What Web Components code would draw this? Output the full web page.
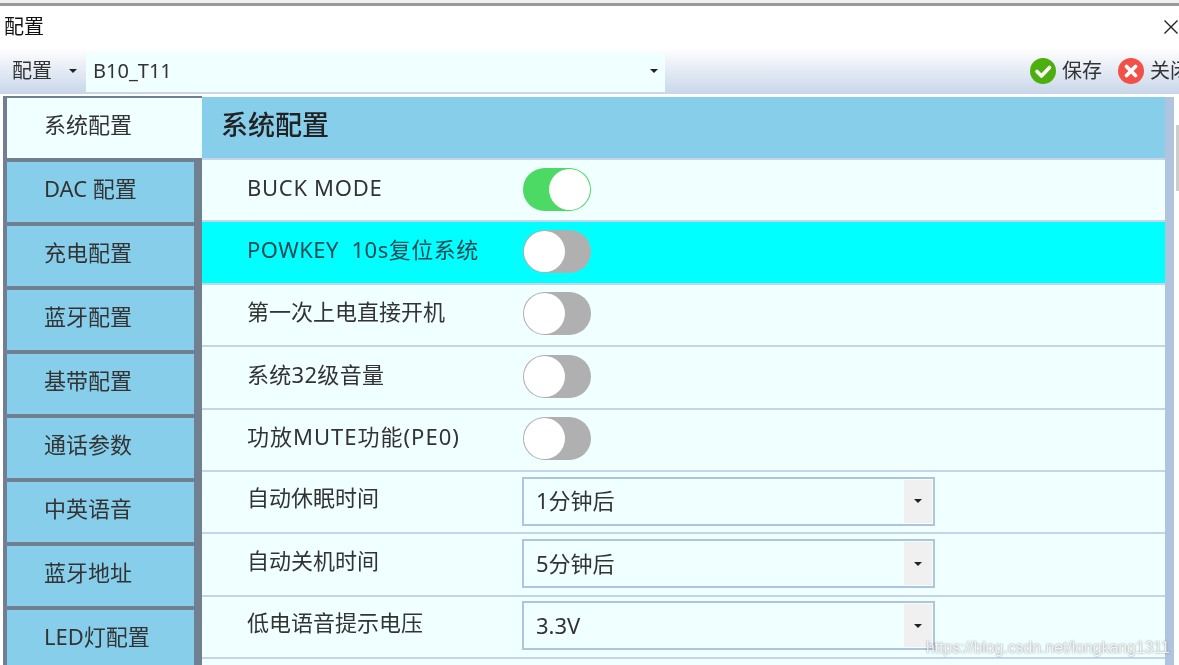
<!DOCTYPE html>
<html lang="zh">
<head>
<meta charset="utf-8">
<title>配置</title>
<style>
    html, body {
        margin: 0;
        height: 100%;
        overflow: hidden;
        background-color: white;
        font-family: "Noto Sans", "Noto Sans CJK SC", sans-serif;
    }
</style>
</head>
<body>
<config-window>
    <span slot="title">配置</span>
    <tool-bar slot="toolbar" profile="B10_T11"></tool-bar>
    <tab-item slot="tabs" active>系统配置</tab-item>
    <tab-item slot="tabs">DAC 配置</tab-item>
    <tab-item slot="tabs">充电配置</tab-item>
    <tab-item slot="tabs">蓝牙配置</tab-item>
    <tab-item slot="tabs">基带配置</tab-item>
    <tab-item slot="tabs">通话参数</tab-item>
    <tab-item slot="tabs">中英语音</tab-item>
    <tab-item slot="tabs">蓝牙地址</tab-item>
    <tab-item slot="tabs">LED灯配置</tab-item>
    <span slot="heading">系统配置</span>
    <setting-row label="BUCK MODE" style="--label-spacing: 0.7px"><toggle-switch on></toggle-switch></setting-row>
    <setting-row label="POWKEY&nbsp;&nbsp;10s复位系统" style="--label-spacing: 0.5px" hot><toggle-switch></toggle-switch></setting-row>
    <setting-row label="第一次上电直接开机"><toggle-switch></toggle-switch></setting-row>
    <setting-row label="系统32级音量" style="--label-spacing: 0.3px"><toggle-switch></toggle-switch></setting-row>
    <setting-row label="功放MUTE功能(PE0)" style="--label-spacing: 1px"><toggle-switch></toggle-switch></setting-row>
    <setting-row label="自动休眠时间" raised><select-box value="1分钟后"></select-box></setting-row>
    <setting-row label="自动关机时间" raised><select-box value="5分钟后"></select-box></setting-row>
    <setting-row label="低电语音提示电压" raised><select-box value="3.3V"></select-box></setting-row>
    <setting-row label=""></setting-row>
</config-window>

<script>
const FONT = `"Noto Sans", "Noto Sans CJK SC", sans-serif`;

const windowTemplate = document.createElement("template");
windowTemplate.innerHTML = `
<style>
    :host {
        display: flex;
        flex-direction: column;
        height: 665px;
        overflow: hidden;
        position: relative;
        font-family: ${FONT};
        color: #333;
        filter: blur(0.45px);
    }

    .topEdge {
        flex: none;
        height: 3px;
        background-color: #f0f0f0;
        border-bottom: 3px solid #999;
    }

    .titleBar {
        flex: none;
        height: 44px;
        box-sizing: border-box;
        display: flex;
        align-items: center;
        justify-content: space-between;
        padding: 0 0 3px 4px;
        font-size: 20px;
        line-height: 28px;
        color: #111;
    }

    .body {
        flex: 1;
        min-height: 0;
        display: flex;
        margin-top: 1px;
        padding-left: 3px;
    }

    .tabs {
        flex: none;
        width: 199px;
        display: flex;
        flex-direction: column;
        gap: 3.6px;
        margin-top: 1px;
        padding-top: 2px;
        background-color: #708090;
        box-sizing: border-box;
    }

    .main {
        flex: none;
        width: 963px;
        display: flex;
        flex-direction: column;
    }

    .heading {
        flex: none;
        height: 63px;
        box-sizing: border-box;
        margin-top: 2px;
        display: flex;
        align-items: center;
        padding: 0 0 5px 19px;
        background-color: #87ceeb;
        font-size: 27px;
        line-height: 36px;
        font-weight: 500;
        color: #222;
        border-bottom: 2px solid #c6d4e8;
    }

    .strip {
        flex: none;
        width: 9px;
        margin-top: 2px;
        background-color: #b0c4de;
    }

    .scroll {
        flex: 1;
        background-color: white;
        position: relative;
    }

    .thumb {
        position: absolute;
        top: 30px;
        left: 2px;
        right: 0;
        height: 66px;
        background-color: #cdcdcd;
    }

    .watermark {
        position: absolute;
        left: 926px;
        top: 639px;
        font-family: "Liberation Sans", sans-serif;
        font-size: 15.8px;
        white-space: nowrap;
        color: rgba(255, 255, 255, 0.85);
        text-shadow: 0 0 2px rgba(60, 60, 60, 0.65);
    }
</style>
<div class="topEdge"></div>
<div class="titleBar">
    <slot name="title"></slot>
    <svg width="16" height="16" viewBox="0 0 16 16"><path d="M1.5 1.5 L14.5 14.5 M14.5 1.5 L1.5 14.5" stroke="#222" stroke-width="1.4" fill="none"/></svg>
</div>
<slot name="toolbar"></slot>
<div class="body">
    <div class="tabs"><slot name="tabs"></slot></div>
    <div class="main">
        <div class="heading"><slot name="heading"></slot></div>
        <slot></slot>
    </div>
    <div class="strip"></div>
    <div class="scroll"><div class="thumb"></div></div>
</div>
<div class="watermark">https://blog.csdn.net/longkang1311</div>`;

class ConfigWindow extends HTMLElement {
    connectedCallback () {
        const shadowRoot = this.attachShadow({mode: "open"});
        shadowRoot.appendChild(windowTemplate.content.cloneNode(true));
    }
}

const toolbarTemplate = document.createElement("template");
toolbarTemplate.innerHTML = `
<style>
    :host {
        display: flex;
        align-items: stretch;
        flex: none;
        height: 44px;
        overflow: hidden;
        background: linear-gradient(#fdfdfe, #c8d6e9);
        font-size: 20px;
        line-height: 28px;
        color: #333;
    }

    .menu {
        flex: none;
        width: 83px;
        margin-left: 3px;
        box-sizing: border-box;
        display: flex;
        align-items: center;
        padding: 0 0 2px 9px;
        gap: 17px;
    }

    .caret {
        width: 0;
        height: 0;
        border: 4px solid transparent;
        border-top: 4px solid #222;
        border-bottom: 0;
    }

    .profile {
        flex: none;
        width: 579px;
        box-sizing: border-box;
        margin: 2px 0;
        display: flex;
        align-items: center;
        justify-content: space-between;
        padding: 0 7px 2px 7px;
        background-color: #f0ffff;
    }

    .actions {
        flex: none;
        margin-left: 365px;
        display: flex;
        align-items: center;
        white-space: nowrap;
        padding-bottom: 2px;
    }

    .action {
        display: flex;
        align-items: center;
        gap: 6px;
        margin-right: 16px;
    }
</style>
<div class="menu"><span>配置</span><span class="caret"></span></div>
<div class="profile"><span class="name"></span><span class="caret"></span></div>
<div class="actions">
    <div class="action">
        <svg width="26" height="26" viewBox="0 0 26 26"><circle cx="13" cy="13" r="13" fill="#4caf0e"/><path d="M7 13.5 L11.5 18 L19.5 9.5" stroke="white" stroke-width="3.6" fill="none" stroke-linecap="round" stroke-linejoin="round"/></svg>
        <span>保存</span>
    </div>
    <div class="action">
        <svg width="26" height="26" viewBox="0 0 26 26"><circle cx="13" cy="13" r="13" fill="#f4504a"/><path d="M8.5 8.5 L17.5 17.5 M17.5 8.5 L8.5 17.5" stroke="white" stroke-width="3.8" fill="none" stroke-linecap="round"/></svg>
        <span>关闭</span>
    </div>
</div>`;

class ToolBar extends HTMLElement {
    connectedCallback () {
        const shadowRoot = this.attachShadow({mode: "open"});
        shadowRoot.appendChild(toolbarTemplate.content.cloneNode(true));
        shadowRoot.querySelector(".name").textContent = this.getAttribute("profile");
    }
}

const tabTemplate = document.createElement("template");
tabTemplate.innerHTML = `
<style>
    :host {
        display: flex;
        align-items: center;
        flex: none;
        height: 60.4px;
        box-sizing: border-box;
        margin: 0 8px 0 4px;
        padding: 0 0 8px 37px;
        background-color: #87ceeb;
        font-size: 22px;
        line-height: 30px;
        color: #333;
        white-space: nowrap;
    }

    :host([active]) {
        margin-right: 0;
        background-color: #f0ffff;
    }
</style>
<slot></slot>`;

class TabItem extends HTMLElement {
    connectedCallback () {
        const shadowRoot = this.attachShadow({mode: "open"});
        shadowRoot.appendChild(tabTemplate.content.cloneNode(true));
    }
}

const rowTemplate = document.createElement("template");
rowTemplate.innerHTML = `
<style>
    :host {
        display: flex;
        align-items: center;
        flex: none;
        box-sizing: border-box;
        height: 62.4px;
        padding: 0 0 2px 45px;
        background-color: #f0ffff;
        border-bottom: 2px solid #c6d4e8;
        font-size: 22px;
        line-height: 30px;
        color: #333;
    }

    :host([hot]) {
        background-color: #00ffff;
        color: #174a55;
    }

    .label {
        flex: none;
        width: 276px;
        white-space: nowrap;
        letter-spacing: var(--label-spacing, 0);
        position: relative;
        top: -2.5px;
    }

    :host([raised]) .label {
        top: -4px;
    }
</style>
<div class="label"></div>
<slot></slot>`;

class SettingRow extends HTMLElement {
    connectedCallback () {
        const shadowRoot = this.attachShadow({mode: "open"});
        shadowRoot.appendChild(rowTemplate.content.cloneNode(true));
        shadowRoot.querySelector(".label").textContent = this.getAttribute("label");
    }
}

const toggleTemplate = document.createElement("template");
toggleTemplate.innerHTML = `
<style>
    :host {
        display: flex;
        align-items: center;
        justify-content: flex-start;
        box-sizing: border-box;
        width: 68px;
        height: 43px;
        padding: 1px;
        border-radius: 22px;
        background-color: #b0b0b0;
    }

    :host([on]) {
        justify-content: flex-end;
        background-color: #4cd964;
    }

    .knob {
        width: 41px;
        height: 41px;
        border-radius: 50%;
        background-color: white;
    }
</style>
<div class="knob"></div>`;

class ToggleSwitch extends HTMLElement {
    connectedCallback () {
        const shadowRoot = this.attachShadow({mode: "open"});
        shadowRoot.appendChild(toggleTemplate.content.cloneNode(true));
    }
}

const selectTemplate = document.createElement("template");
selectTemplate.innerHTML = `
<style>
    :host {
        display: flex;
        align-items: stretch;
        box-sizing: border-box;
        width: 413px;
        height: 49px;
        margin-left: -1px;
        border: 2px solid #b0c4de;
        font-size: 22px;
        line-height: 30px;
        color: #333;
    }

    .value {
        flex: 1;
        display: flex;
        align-items: center;
        padding: 0 0 2px 12px;
    }

    .arrow {
        flex: none;
        width: 28px;
        margin: 1px 1px 1px 0;
        display: flex;
        align-items: center;
        justify-content: center;
        background-color: #f0f0f0;
    }

    .caret {
        width: 0;
        height: 0;
        border: 4px solid transparent;
        border-top: 4px solid #222;
        border-bottom: 0;
    }
</style>
<div class="value"></div>
<div class="arrow"><span class="caret"></span></div>`;

class SelectBox extends HTMLElement {
    connectedCallback () {
        const shadowRoot = this.attachShadow({mode: "open"});
        shadowRoot.appendChild(selectTemplate.content.cloneNode(true));
        shadowRoot.querySelector(".value").textContent = this.getAttribute("value");
    }
}

window.customElements.define("config-window", ConfigWindow);
window.customElements.define("tool-bar", ToolBar);
window.customElements.define("tab-item", TabItem);
window.customElements.define("setting-row", SettingRow);
window.customElements.define("toggle-switch", ToggleSwitch);
window.customElements.define("select-box", SelectBox);
</script>
</body>
</html>
